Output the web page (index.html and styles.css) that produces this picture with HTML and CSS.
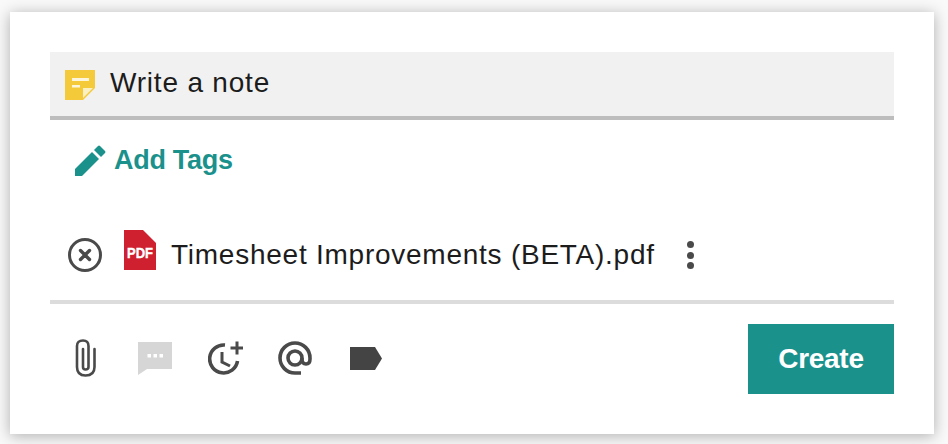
FILE: index.html
```html
<!DOCTYPE html>
<html>

	<head>
		<meta charset="UTF-8">
		<title>Write a note</title>
		<link rel="stylesheet" href="styles.css">
	</head>

	<body>
		<div class="card">

			<div class="noteBar">
				<svg class="noteIcon" width="30" height="30" viewBox="0 0 30 30">
					<path d="M0 0H30V18L18 30H0Z" fill="#f4ca3a" />
					<path d="M18 28V18H28Z" fill="#fbf0c4" />
					<rect x="7" y="8" width="17" height="3" fill="#fdf6dc" />
					<rect x="7" y="15" width="8" height="2.500" fill="#fdf6dc" />
				</svg>
				<span class="noteText">Write a note</span>
			</div>

			<div class="addTags">
				<svg width="31" height="31" viewBox="0 0 31 31">
					<path d="M0 31V24L17 7L24 14L7 31Z" fill="#1b918c" />
					<path d="M19 5L23 1Q24 0 25 1L30 6Q31 7 30 8L26 12Z" fill="#1b918c" />
				</svg>
				<span>Add Tags</span>
			</div>

			<div class="fileRow">
				<svg class="closeIcon" width="34" height="34" viewBox="0 0 34 34">
					<circle cx="17" cy="17" r="15.500" fill="none" stroke="#4a4a4a" stroke-width="3" />
					<path d="M12.500 12.500L21.500 21.500M21.500 12.500L12.500 21.500" stroke="#4a4a4a" stroke-width="3.400" stroke-linecap="round" />
				</svg>
				<svg class="pdfIcon" width="32" height="40" viewBox="0 0 32 40">
					<path d="M0 0H19L32 13V40H0Z" fill="#cf2030" />
					<text x="3" y="28" class="pdfLabel" textLength="26" lengthAdjust="spacingAndGlyphs">PDF</text>
				</svg>
				<span class="fileName">Timesheet Improvements (BETA).pdf</span>
				<div class="moreIcon"><i></i><i></i><i></i></div>
			</div>

			<div class="toolBar">
				<div class="tools">
					<svg width="28" height="38" viewBox="0 0 28 38">
						<path d="M8 10V28Q8 30.500 10.500 30.500Q13.500 30.500 13.500 28V7Q13.500 1.500 8 1.500Q2 1.500 2 7V28Q2 36.500 10.500 36.500Q19.500 36.500 19.500 28V10" fill="none" stroke="#4a4a4a" stroke-width="2.600" stroke-linecap="round" />
					</svg>
					<svg width="35" height="33" viewBox="0 0 35 33">
						<path d="M0 0H34V27H9L0 33Z" fill="#d6d6d6" />
						<rect x="9.500" y="12" width="3.500" height="3.500" fill="#fff" />
						<rect x="15.500" y="12" width="3.500" height="3.500" fill="#fff" />
						<rect x="21.500" y="12" width="3.500" height="3.500" fill="#fff" />
					</svg>
					<svg width="35" height="34" viewBox="0 0 35 34">
						<path d="M17 4A14 14 0 1 0 29.500 20" fill="none" stroke="#4a4a4a" stroke-width="3.600" />
						<path d="M14 11V21L22 25" fill="none" stroke="#4a4a4a" stroke-width="3" />
						<path d="M29 0.500V13.500M22.500 7H35" fill="none" stroke="#4a4a4a" stroke-width="3" />
					</svg>
					<svg width="37" height="34" viewBox="0 0 37 34">
						<path d="M23 32H17A15 15 0 1 1 32 17V18Q32 23 28 23Q24 23 24 18V17" fill="none" stroke="#4a4a4a" stroke-width="3.600" />
						<circle cx="17" cy="17" r="7" fill="none" stroke="#4a4a4a" stroke-width="3.600" />
					</svg>
					<svg width="32" height="23" viewBox="0 0 32 23">
						<path d="M0 0H25L32 11.500L25 23H0Z" fill="#444" />
					</svg>
				</div>
				<button class="createBu">Create</button>
			</div>

		</div>
	</body>

</html>
```
FILE: styles.css
```css
* {
	margin: 0px;
	padding: 0px;
	box-sizing: border-box;
}

html,
body {
	height: 100%;
}

body {
	background-color: #f9f9f9;
	padding: 12px 14px 10px 10px;
	font-family: "Liberation Sans", Arial, sans-serif;
	overflow: hidden;
}

.card {
	height: 422px;
	background-color: #fff;
	padding: 40px 40px 0px 40px;
	box-shadow: 0px 2px 14px rgba(0, 0, 0, 0.3);
}

.noteBar {
	display: flex;
	align-items: center;
	height: 68px;
	padding: 0px 0px 2px 15px;
	gap: 15px;
	background-color: #f1f1f1;
	border-bottom: 4px solid #bdbdbd;
}

.noteIcon {
	margin-top: 4px;
}

.noteText {
	font-size: 28px;
	letter-spacing: 0.8px;
	color: #1c1c1c;
}

.addTags {
	display: flex;
	align-items: center;
	gap: 8px;
	height: 80px;
	padding-left: 25px;
	font-size: 27px;
	font-weight: bold;
	letter-spacing: -0.3px;
	color: #1b918c;
}

.fileRow {
	display: flex;
	align-items: center;
	height: 104px;
	padding: 10px 0px 0px 18px;
	border-bottom: 4px solid #dcdcdc;
}

.closeIcon {
	margin-right: 22px;
}

.pdfIcon {
	margin: -10px 15px 0px 0px;
}

.pdfLabel {
	font-family: "Liberation Sans", Arial, sans-serif;
	font-size: 15px;
	font-weight: bold;
	fill: #fff;
	stroke: #fff;
	stroke-width: 0.4px;
}

.fileName {
	font-size: 28px;
	letter-spacing: 0.75px;
	color: #1c1c1c;
}

.moreIcon {
	display: flex;
	flex-direction: column;
	gap: 3.5px;
	margin-left: 32px;
}

.moreIcon i {
	display: block;
	width: 7px;
	height: 7px;
	border-radius: 50%;
	background-color: #4a4a4a;
}

.toolBar {
	display: flex;
	justify-content: space-between;
	align-items: flex-start;
	padding-top: 20px;
}

.tools {
	display: flex;
	align-items: center;
	gap: 35px;
	height: 68px;
	padding-left: 25px;
}

.createBu {
	width: 146px;
	height: 70px;
	border: none;
	background-color: #1b918c;
	color: #fff;
	font-family: "Liberation Sans", Arial, sans-serif;
	font-size: 28px;
	font-weight: bold;
	letter-spacing: -0.3px;
}
```
